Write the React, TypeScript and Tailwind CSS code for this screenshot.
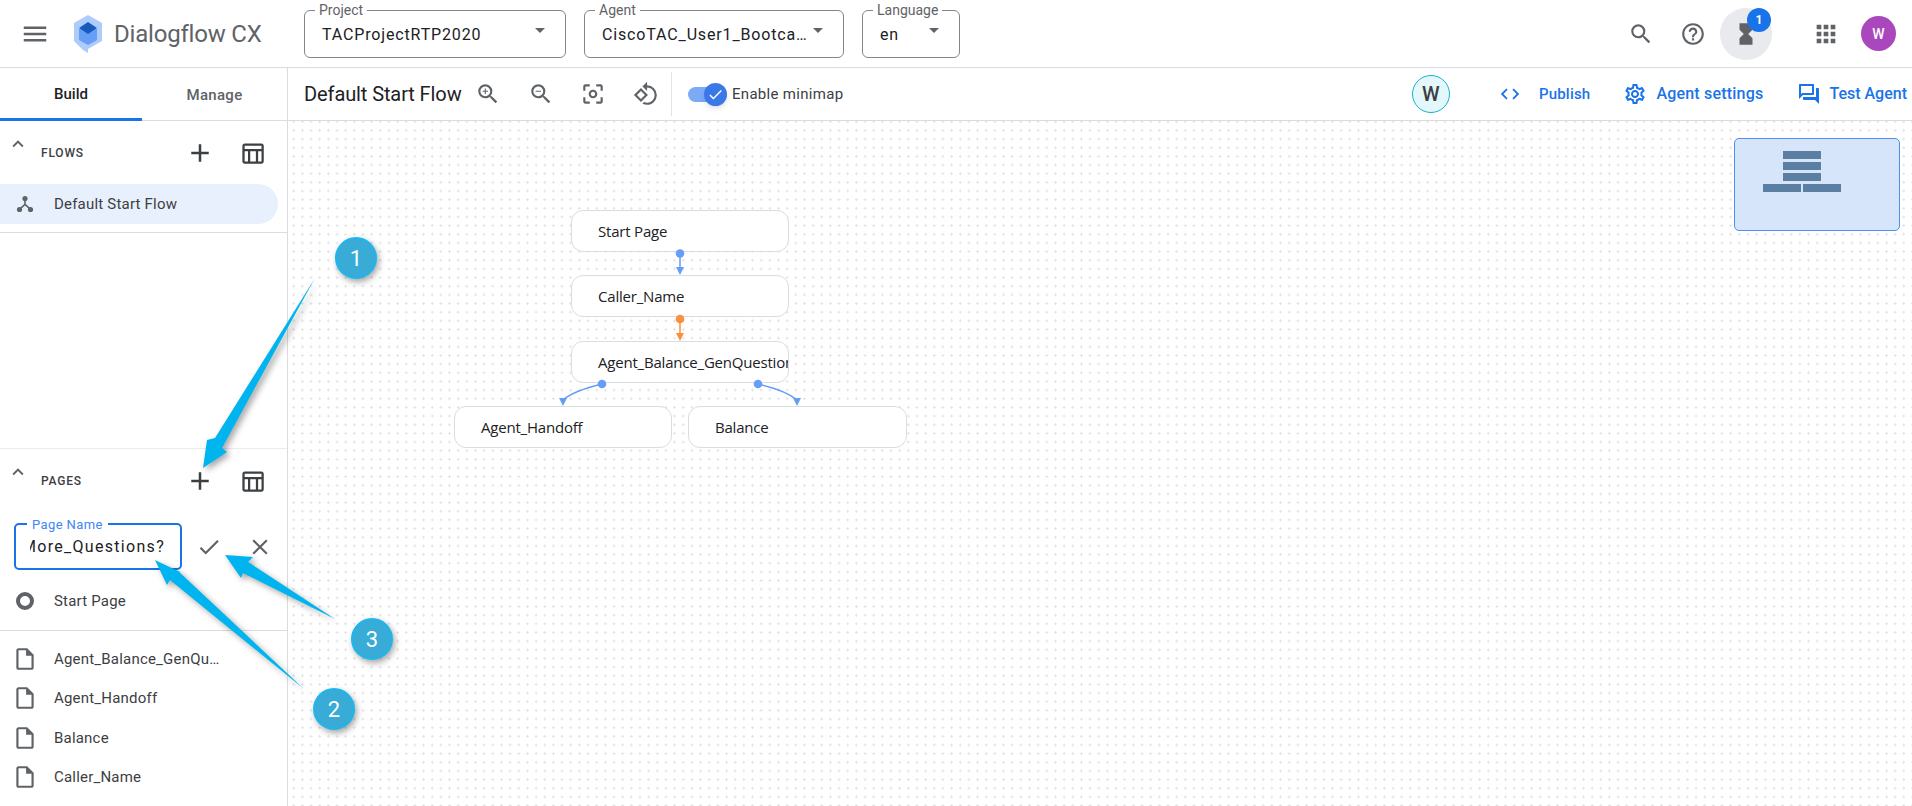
import {
  MdMenu,
  MdSearch,
  MdHelpOutline,
  MdApps,
  MdAdd,
  MdOutlineTableChart,
  MdCheck,
  MdClose,
  MdExpandLess,
  MdArrowDropDown,
  MdOutlineInsertDriveFile,
  MdOutlineCenterFocusWeak,
  MdOutlineSettings,
  MdCode,
  MdOutlineQuestionAnswer,
  MdZoomIn,
  MdZoomOut,
  MdRotate90DegreesCcw,
  MdHourglassFull,
} from "react-icons/md";

function Logo() {
  return (
    <svg width="30" height="38" viewBox="0 0 30 38">
      <path d="M15 0 29 8v18l-14 8v4l-5-3-9-9V8z" fill="#aecbfa" />
      <path d="M6 14h18v11l-9 5-9-5z" fill="#669df6" />
      <path d="M15 7l9 6-9 6-9-6z" fill="#185abc" />
    </svg>
  );
}

function Dropdown({ label, value, width, textWidth }: { label: string; value: string; width: string; textWidth: string }) {
  return (
    <div className={`relative h-12 ${width} rounded-md border border-[#80868b] flex items-center pl-[17px] pr-2`}>
      <span className="absolute -top-[9px] left-[10px] bg-white px-1 text-sm leading-4 text-[#5f6368]">{label}</span>
      <span className={`${textWidth} truncate pt-[2px] text-base text-[#202124] tracking-[0.85px]`}>{value}</span>
      <MdArrowDropDown className="absolute right-[13px] top-[7px] text-[#5f6368]" size={24} />
    </div>
  );
}

function Header() {
  return (
    <header className="h-[68px] shrink-0 flex items-center border-b border-[#dadce0] bg-white">
      <MdMenu className="ml-[20px] text-[#5f6368]" size={30} />
      <div className="ml-[23px]">
        <Logo />
      </div>
      <span className="ml-[11px] w-[190px] text-[24px] text-[#5f6368] tracking-[-0.2px]">Dialogflow CX</span>
      <Dropdown label="Project" value="TACProjectRTP2020" width="w-[262px]" textWidth="w-[210px]" />
      <div className="w-[18px]" />
      <Dropdown label="Agent" value="CiscoTAC_User1_Bootcamp" width="w-[260px]" textWidth="w-[209px]" />
      <div className="w-[18px]" />
      <Dropdown label="Language" value="en" width="w-[98px]" textWidth="w-[50px]" />
      <div className="flex-1" />
      <MdSearch className="text-[#5f6368]" size={26} />
      <MdHelpOutline className="ml-[26px] text-[#5f6368]" size={26} />
      <div className="relative ml-[14px] w-[52px] h-[52px] rounded-full bg-[#e8eaed] flex items-center justify-center">
        <MdHourglassFull className="text-[#5f6368]" size={26} />
        <span className="absolute -top-[0px] left-[27px] w-[24px] h-[24px] rounded-full bg-[#1a73e8] text-white text-xs font-bold flex items-center justify-center">
          1
        </span>
      </div>
      <MdApps className="ml-[40px] text-[#5f6368]" size={28} />
      <div className="ml-[21px] mr-[16px] w-[35px] h-[35px] rounded-full bg-[#ab47bc] text-white text-sm font-medium flex items-center justify-center">
        W
      </div>
    </header>
  );
}

function FlowIcon() {
  return (
    <svg width="18" height="18" viewBox="0 0 18 18" fill="#5f6368">
      <circle cx="9" cy="3.5" r="2.6" />
      <circle cx="3.5" cy="14.5" r="2.6" />
      <circle cx="14.5" cy="14.5" r="2.6" />
      <path d="M8.2 4h1.6v5l5 4.5-1 1.2L9 10.5l-4.800 4.200-1-1.200 5-4.500z" />
    </svg>
  );
}

function SectionHead({ title }: { title: string }) {
  return (
    <div className="h-[54px] flex items-center relative">
      <MdExpandLess className="absolute left-[7px] top-[7px] text-[#5f6368]" size={22} />
      <span className="ml-[41px] w-[144px] text-xs font-medium tracking-[0.8px] text-[#3c4043]">{title}</span>
      <MdAdd className="text-[#3c4043]" size={30} />
      <MdOutlineTableChart className="ml-[24px] text-[#3c4043]" size={27} />
    </div>
  );
}

function PageRow({ name }: { name: string }) {
  return (
    <div className="h-[39.5px] flex items-center">
      <MdOutlineInsertDriveFile className="ml-[12px] text-[#5f6368]" size={26} />
      <span className="ml-[16px] text-[15px] text-[#3c4043] tracking-[0.2px]">{name}</span>
    </div>
  );
}

function Sidebar() {
  return (
    <aside className="w-[288px] shrink-0 flex flex-col border-r border-[#dadce0] bg-white">
      <div className="h-[53px] shrink-0 flex border-b border-[#dadce0] text-[15px] font-medium">
        <div className="w-[142px] flex items-center justify-center pt-[2px] text-[#202124] border-b-[3px] border-[#1a73e8] h-[53px]">Build</div>
        <div className="w-[145px] flex items-center justify-center pt-[2px] text-[#5f6368] tracking-[0.3px]">Manage</div>
      </div>
      <div className="h-[112px] shrink-0 border-b border-[#dadce0]">
        <div className="pt-[5px]">
          <SectionHead title="FLOWS" />
        </div>
        <div className="mt-[4px] w-[278px] h-[40px] rounded-r-[20px] bg-[#e8f0fe] flex items-center pl-[16px]">
          <FlowIcon />
          <span className="ml-[20px] pt-[1px] text-[15px] text-[#3c4043] tracking-[0.2px]">Default Start Flow</span>
        </div>
      </div>
      <div className="h-[215px] shrink-0" />
      <div className="flex-1 border-t border-[#ebebeb] pt-[5px]">
        <SectionHead title="PAGES" />
        <div className="mt-[15px] flex items-center">
          <div className="relative ml-[14px] w-[168px] h-[47px] rounded-[5px] border-2 border-[#1a73e8] flex items-center">
            <span className="absolute -top-[8px] left-[11px] bg-white px-[5px] text-[13px] leading-4 text-[#4285f4] tracking-[0.4px]">Page Name</span>
            <div className="ml-[14px] w-[135px] overflow-hidden flex justify-end">
              <span className="whitespace-nowrap text-base text-[#202124] tracking-[1.3px]">More_Questions?</span>
            </div>
          </div>
          <MdCheck className="ml-[14px] text-[#5f6368]" size={26} />
          <MdClose className="ml-[25px] text-[#5f6368]" size={26} />
        </div>
        <div className="h-[60px] flex items-center border-b border-[#dadce0] mt-[1px]">
          <svg className="ml-[16px]" width="18" height="18" viewBox="0 0 18 18">
            <circle cx="9" cy="9" r="7" fill="none" stroke="#5f6368" strokeWidth="4" />
          </svg>
          <span className="ml-[20px] pt-[1px] text-[15px] text-[#3c4043] tracking-[0.2px]">Start Page</span>
        </div>
        <div className="pt-[8px]">
          <PageRow name="Agent_Balance_GenQu…" />
          <PageRow name="Agent_Handoff" />
          <PageRow name="Balance" />
          <PageRow name="Caller_Name" />
        </div>
      </div>
    </aside>
  );
}

function Toolbar() {
  return (
    <div className="h-[53px] shrink-0 flex items-center border-b border-[#dadce0] bg-white">
      <span className="ml-[16px] w-[171px] text-xl text-[#202124] tracking-[-0.1px]">Default Start Flow</span>
      <MdZoomIn className="text-[#5f6368]" size={26} />
      <MdZoomOut className="ml-[27px] text-[#5f6368]" size={26} />
      <MdOutlineCenterFocusWeak className="ml-[26px] text-[#5f6368]" size={26} />
      <MdRotate90DegreesCcw className="ml-[27px] text-[#5f6368]" size={26} />
      <div className="ml-[12px] h-[44px] w-px bg-[#e4e4e4]" />
      <div className="relative ml-[16px] w-[39px] h-[15px] rounded-full bg-[#7baaf7]">
        <div className="absolute -right-[0px] -top-[4px] w-[23px] h-[23px] rounded-full bg-[#3b78e7] shadow-md flex items-center justify-center">
          <MdCheck className="text-white" size={17} />
        </div>
      </div>
      <span className="ml-[5px] pt-[1px] text-[15px] text-[#3c4043] tracking-[0.3px]">Enable minimap</span>
      <div className="flex-1" />
      <div className="w-[38px] h-[38px] rounded-full bg-[#e4f7fb] border border-[#12b5cb] text-xl font-medium text-[#3c4043] flex items-center justify-center">
        W
      </div>
      <MdCode className="ml-[49px] text-[#1a73e8]" size={22} />
      <span className="ml-[18px] text-[15px] font-medium text-[#1a73e8] tracking-[0.2px]">Publish</span>
      <MdOutlineSettings className="ml-[33px] text-[#1a73e8]" size={24} />
      <span className="ml-[9px] text-base font-medium text-[#1a73e8] tracking-[0.2px]">Agent settings</span>
      <MdOutlineQuestionAnswer className="ml-[34px] text-[#1a73e8]" size={24} />
      <span className="ml-[8px] mr-[5px] text-base font-medium text-[#1a73e8]">Test Agent</span>
    </div>
  );
}

const nodes = [
  { name: "Start Page", cls: "left-[283px] top-[89px] w-[218px] h-[42px]" },
  { name: "Caller_Name", cls: "left-[283px] top-[154px] w-[218px] h-[42px]" },
  { name: "Agent_Balance_GenQuestions", cls: "left-[283px] top-[220px] w-[218px] h-[42px]" },
  { name: "Agent_Handoff", cls: "left-[166px] top-[285px] w-[218px] h-[42px]" },
  { name: "Balance", cls: "left-[400px] top-[285px] w-[219px] h-[42px]" },
];

function Canvas() {
  return (
    <div className="relative flex-1 bg-white bg-[radial-gradient(circle,#e3e3e3_1px,transparent_1.2px)] bg-[size:8.67px_8.67px] bg-[position:1.4px_-3.6px] overflow-hidden">
      {nodes.map((n) => (
        <div
          key={n.name}
          className={`absolute ${n.cls} rounded-xl border border-[#dadce0] bg-white overflow-hidden flex items-center pl-[26px] text-[15px] text-[#202124] whitespace-nowrap font-['Open_Sans',sans-serif] tracking-[-0.2px]`}
        >
          {n.name}
        </div>
      ))}
      <svg className="absolute left-0 top-0" width="700" height="340" viewBox="288 121 700 340">
        <g stroke="#669df6" strokeWidth="1.5" fill="none">
          <path d="M680 254V268" />
          <path d="M602 384C585 388 570 394 563 400" />
          <path d="M758 384C775 388 790 394 797 400" />
        </g>
        <path d="M680 319V333" stroke="#fa903e" strokeWidth="1.5" fill="none" />
        <g fill="#669df6">
          <circle cx="680" cy="253.500" r="4.300" />
          <path d="M676 267h8l-4 8z" />
          <circle cx="602" cy="384" r="4.300" />
          <path d="M559 398h8l-4 8z" />
          <circle cx="758" cy="384" r="4.300" />
          <path d="M793 398h8l-4 8z" />
        </g>
        <g fill="#fa903e">
          <circle cx="680" cy="319" r="4.300" />
          <path d="M676 333h8l-4 8z" />
        </g>
      </svg>
      <div className="absolute left-[1446px] top-[17px] w-[166px] h-[93px] rounded-[5px] border border-[#4d90f0] bg-[#d7e5fb] flex flex-col items-start pt-[12px] gap-[3px]">
        <div className="ml-[48px] w-[38px] h-[8px] bg-[#5b7ea3]" />
        <div className="ml-[48px] w-[38px] h-[8px] bg-[#5b7ea3]" />
        <div className="ml-[48px] w-[38px] h-[8px] bg-[#5b7ea3]" />
        <div className="ml-[28px] flex gap-[2px]">
          <div className="w-[38px] h-[8px] bg-[#5b7ea3]" />
          <div className="w-[38px] h-[8px] bg-[#5b7ea3]" />
        </div>
      </div>
    </div>
  );
}

function Callout({ num, cls }: { num: string; cls: string }) {
  return (
    <div className={`absolute ${cls} w-[42px] h-[42px] rounded-full bg-[#38abd6] border-2 border-[#1db7ee] shadow-[2px_3px_6px_rgba(0,0,0,0.35)] text-white text-[22px] flex items-center justify-center`}>
      {num}
    </div>
  );
}

function Annotations() {
  return (
    <>
      <svg className="absolute left-0 top-0 drop-shadow-[3px_3px_3px_rgba(0,0,0,0.35)]" width="1912" height="806" viewBox="0 0 1912 806">
        <g fill="#00b4f0">
          <path d="M315 278 222 448 227 452 203 468 207 440 215 438z" />
          <path d="M304 689 170 580 167 585 155 560 182 573 177 570z" />
          <path d="M335 619 243 573 241 578 225 555 253 557 248 562z" />
        </g>
      </svg>
      <Callout num="1" cls="left-[335px] top-[237px]" />
      <Callout num="2" cls="left-[313px] top-[688px]" />
      <Callout num="3" cls="left-[351px] top-[618px]" />
    </>
  );
}

export default function App() {
  return (
    <div className="relative w-[1912px] h-[806px] overflow-hidden flex flex-col bg-white font-['Roboto',sans-serif]">
      <Header />
      <div className="flex-1 flex min-h-0">
        <Sidebar />
        <div className="flex-1 flex flex-col min-w-0">
          <Toolbar />
          <Canvas />
        </div>
      </div>
      <Annotations />
    </div>
  );
}
